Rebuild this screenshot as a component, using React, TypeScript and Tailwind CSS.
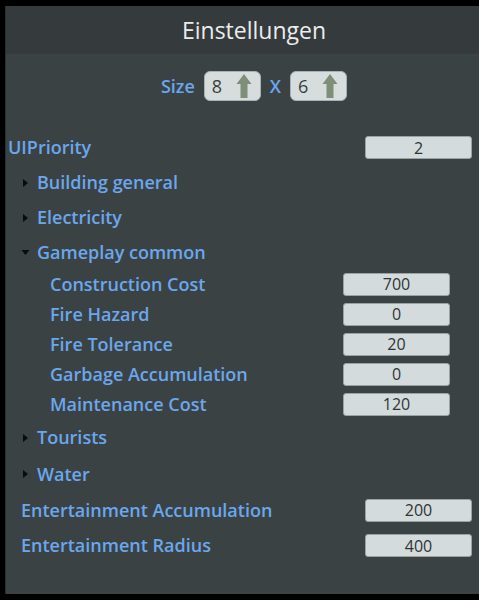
import React from "react";

const font = { fontFamily: '"Open Sans", "Noto Sans", sans-serif' };

function UpArrow() {
  return (
    <svg width="16" height="26" viewBox="0 0 16 26" className="shrink-0">
      <path d="M8 1 L15.5 11 L11.5 11 L11.5 25 L4.5 25 L4.5 11 L0.5 11 Z" fill="#7f8e78" />
    </svg>
  );
}

function SizeBox({ value }: { value: string }) {
  return (
    <div className="flex h-[30px] w-[57px] items-center justify-between rounded-[6px] border border-[#a9b2b3] bg-[#d7dddd] pl-[7px] pr-[8px]">
      <span className="text-[18px] leading-none text-[#3a3f40]">{value}</span>
      <UpArrow />
    </div>
  );
}

function ValueBox({ value }: { value: string }) {
  return (
    <div className="flex h-[23px] w-[107px] items-center justify-center rounded-[3px] border border-[#9aa3a4] bg-[#d4dbdc] text-[16px] leading-none text-[#2f3436]">
      {value}
    </div>
  );
}

function Caret({ open }: { open?: boolean }) {
  return (
    <svg width="9" height="10" viewBox="0 0 9 10" className="shrink-0">
      {open ? <path d="M0.5 3 L8.5 3 L4.5 8 Z" fill="#0b0b0b" /> : <path d="M2 1 L7 5 L2 9 Z" fill="#0b0b0b" />}
    </svg>
  );
}

function Group({ label, open, h = "h-[35px]" }: { label: string; open?: boolean; h?: string }) {
  return (
    <div className={`flex ${h} items-center gap-[7px] pl-[15px]`}>
      <Caret open={open} />
      <span className="text-[18px] font-semibold text-[#6ba7ec]">{label}</span>
    </div>
  );
}

const sub = [
  ["Construction Cost", "700"],
  ["Fire Hazard", "0"],
  ["Fire Tolerance", "20"],
  ["Garbage Accumulation", "0"],
  ["Maintenance Cost", "120"],
];

export default function App() {
  return (
    <div className="h-[600px] w-[479px] overflow-hidden bg-black pl-[5px] pt-[6px]" style={font}>
      <div className="flex h-[588px] w-[497px] flex-col border-l border-[#2a2e2f] bg-[#3b4244]">
        <div className="flex h-[48px] shrink-0 items-center justify-center bg-[#353b3d] text-[23px] text-[#ebeced]">
          Einstellungen
        </div>

        <div className="mt-[17px] flex h-[30px] items-center justify-center gap-[8px]">
          <span className="mr-[1px] text-[18px] font-semibold text-[#6ba7ec]">Size</span>
          <SizeBox value="8" />
          <span className="mx-[1px] text-[18px] font-semibold text-[#6ba7ec]">X</span>
          <SizeBox value="6" />
        </div>

        <div className="mt-[29px] flex flex-col">
          <div className="flex h-[35px] items-center justify-between pl-[2px] pr-[30px]">
            <span className="text-[18px] font-semibold text-[#6ba7ec]">UIPriority</span>
            <ValueBox value="2" />
          </div>
          <Group label="Building general" />
          <Group label="Electricity" />
          <Group label="Gameplay common" open h="h-[34px]" />
          {sub.map(([label, value]) => (
            <div key={label} className="flex h-[30px] items-center justify-between pl-[44px] pr-[52px]">
              <span className="text-[18px] font-semibold text-[#6ba7ec]">{label}</span>
              <ValueBox value={value} />
            </div>
          ))}
          <Group label="Tourists" h="h-[37px]" />
          <Group label="Water" h="h-[36px]" />
          <div className="flex h-[36px] items-center justify-between pl-[15px] pr-[30px]">
            <span className="text-[18px] font-semibold text-[#6ba7ec]">Entertainment Accumulation</span>
            <ValueBox value="200" />
          </div>
          <div className="flex h-[35px] items-center justify-between pl-[15px] pr-[30px]">
            <span className="text-[18px] font-semibold text-[#6ba7ec]">Entertainment Radius</span>
            <ValueBox value="400" />
          </div>
        </div>
      </div>
    </div>
  );
}
